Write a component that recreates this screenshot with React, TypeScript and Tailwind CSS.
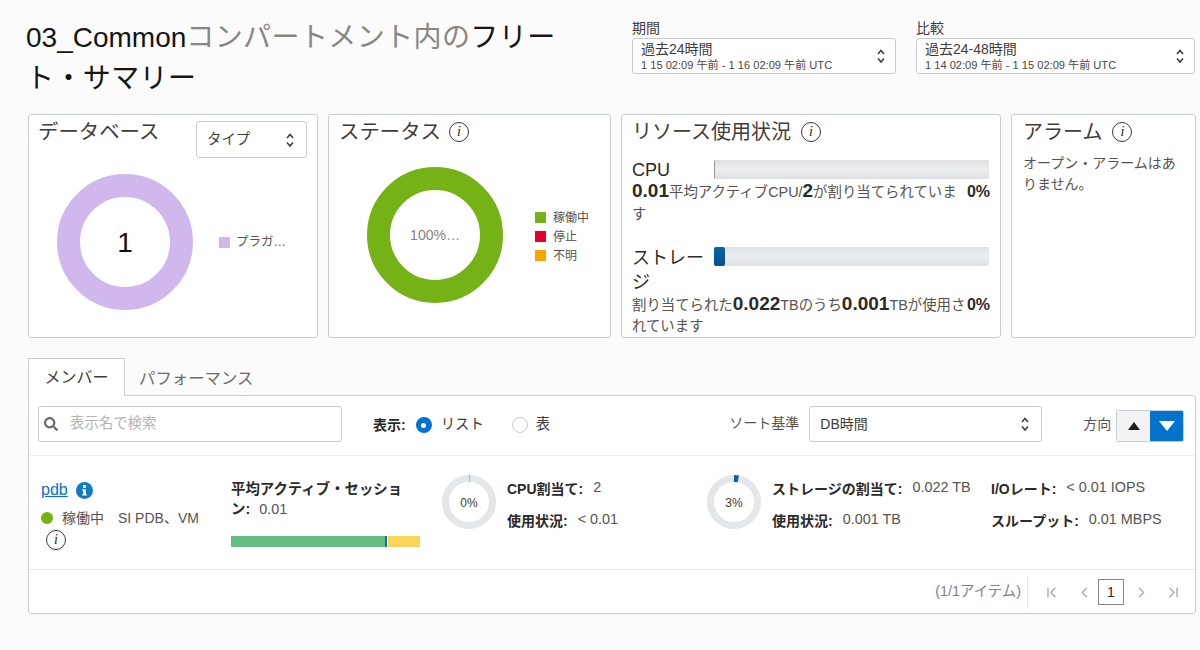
import { ChevronFirst, ChevronLast, ChevronLeft, ChevronRight } from "lucide-react"
import { FaSearch } from "react-icons/fa"

const font = "font-['Liberation_Sans','Noto_Sans_CJK_JP',sans-serif]"

function Updown({ className = "" }: { className?: string }) {
  return (
    <svg width="10" height="16" viewBox="0 0 10 16" className={className} fill="none" stroke="#3f3c39" strokeWidth="1.6">
      <path d="M2 6l3-3.500L8 6" />
      <path d="M2 10.500L5 14l3-3.500" />
    </svg>
  )
}

function InfoMark({ size = "w-[20px] h-[20px]" }: { size?: string }) {
  return (
    <span className={`${size} inline-flex shrink-0 items-center justify-center rounded-full border border-[#3a3734] bg-white font-['Liberation_Serif',serif] text-[14px] italic leading-none text-[#2c2a28]`}>
      i
    </span>
  )
}

function Card({ className, children }: { className: string; children: React.ReactNode }) {
  return <div className={`h-[224px] shrink-0 overflow-hidden rounded-[3px] border border-[#c7cdd2] bg-white ${className}`}>{children}</div>
}

function Meter({ value, color }: { value: number; color: string }) {
  const r = 23.5
  const c = 2 * Math.PI * r
  return (
    <svg width="54" height="54" viewBox="0 0 54 54" className="shrink-0">
      <circle cx="27" cy="27" r={r} fill="none" stroke="#e3e7e9" strokeWidth="7" />
      <circle
        cx="27"
        cy="27"
        r={r}
        fill="none"
        stroke={color}
        strokeWidth="7"
        strokeDasharray={`${Math.max(c * value, 0.5)} ${c}`}
        transform="rotate(-90 27 27)"
      />
      <text x="27" y="32" textAnchor="middle" fontSize="12" fill="#3f3c39">
        {value === 0 ? "0%" : "3%"}
      </text>
    </svg>
  )
}

function Stat({ label, value, className = "" }: { label: string; value: string; className?: string }) {
  return (
    <div className={`flex items-start whitespace-nowrap ${className}`}>
      <span className="text-[14px] font-bold text-[#2c2a28]">{label}:</span>
      <span className="ml-[10px] -mt-[2px] text-[14.4px] text-[#56534f]">{value}</span>
    </div>
  )
}

function DateSelect({ main, sub, width }: { main: string; sub: string; width: string }) {
  return (
    <div className={`flex h-[36px] items-center justify-between rounded-[3px] border border-[#c7cdd2] bg-white pl-[8px] pr-[9px] ${width}`}>
      <div className="leading-none">
        <div className="text-[14px] leading-[17px] text-[#3f3c39]">{main}</div>
        <div className="text-[11.1px] leading-[14px] text-[#4a4744]">{sub}</div>
      </div>
      <Updown />
    </div>
  )
}

function Swatch({ color, label }: { color: string; label: string }) {
  return (
    <div className="flex h-[19px] items-center gap-[7px] text-[12px] text-[#56534f]">
      <span className={`h-[11px] w-[11px] ${color}`} />
      {label}
    </div>
  )
}

export default function App() {
  return (
    <div className={`${font} h-[650px] w-[1200px] overflow-hidden bg-[#fbfbfb] pl-[28px] pr-[4px]`}>
      {/* header */}
      <div className="flex h-[114px] items-start">
        <h1 className="-ml-[2px] mt-[17px] w-[536px] text-[28px] leading-[41px] text-[#161513]">
          03_Common<span className="tracking-[0.4px] text-[#8a8682]">コンパートメント内の</span>
          <span className="tracking-[0.4px]">フリート・サマリー</span>
        </h1>
        <div className="ml-[70px] mt-[18px]">
          <div className="text-[14px] leading-[20px] text-[#3f3c39]">期間</div>
          <DateSelect main="過去24時間" sub="1 15 02:09 午前 - 1 16 02:09 午前 UTC" width="w-[264px]" />
        </div>
        <div className="ml-[20px] mt-[18px]">
          <div className="text-[14px] leading-[20px] text-[#3f3c39]">比較</div>
          <DateSelect main="過去24-48時間" sub="1 14 02:09 午前 - 1 15 02:09 午前 UTC" width="w-[279px]" />
        </div>
      </div>

      {/* summary cards */}
      <div className="flex gap-[10px]">
        <Card className="w-[290px] pl-[9px] pr-[10px]">
          <div className="flex items-start justify-between">
            <div className="mt-[2px] text-[20.400px] leading-[30px] text-[#3f3c39]">データベース</div>
            <div className="mt-[6px] flex h-[37px] w-[111px] items-center justify-between rounded-[3px] border border-[#c7cdd2] pl-[10px] pr-[11px] text-[14.400px] text-[#3f3c39]">
              タイプ
              <Updown />
            </div>
          </div>
          <div className="mt-[16px] flex items-center pl-[19px]">
            <div className="relative h-[136px] w-[136px] shrink-0 rounded-full border-[23px] border-[#d0b8ec]">
              <span className="absolute inset-0 flex items-center justify-center pt-[2px] text-[28px] text-[#111]">1</span>
            </div>
            <div className="ml-[26px] flex items-center gap-[6px] text-[12.500px] text-[#56534f]">
              <span className="h-[11px] w-[11px] bg-[#d0b8ec]" />
              プラガ…
            </div>
          </div>
        </Card>

        <Card className="w-[283px] pl-[10px]">
          <div className="mt-[2px] flex items-center gap-[8px] text-[20.400px] leading-[30px] text-[#3f3c39]">
            ステータス
            <InfoMark />
          </div>
          <div className="mt-[20px] flex items-center pl-[28px]">
            <div className="flex h-[136px] w-[136px] shrink-0 items-center justify-center rounded-full border-[23px] border-[#75b216] text-[14px] text-[#85817d]">
              100%…
            </div>
            <div className="ml-[32px] pt-[3px]">
              <Swatch color="bg-[#75b216]" label="稼働中" />
              <Swatch color="bg-[#e4002b]" label="停止" />
              <Swatch color="bg-[#f7a600]" label="不明" />
            </div>
          </div>
        </Card>

        <Card className="w-[380px] pl-[10px] pr-[10px]">
          <div className="mt-[2px] flex items-center gap-[10px] text-[20px] leading-[30px] text-[#3f3c39]">
            リソース使用状況
            <InfoMark />
          </div>
          <div className="mt-[11px] flex">
            <div className="w-[82px] shrink-0 text-[18px] leading-[24px] text-[#2c2a28]">CPU</div>
            <div className="mt-[2px] h-[19px] w-[275px] rounded-[2px] border-l border-l-[#8d9a90] bg-linear-to-b from-[#dde1e3] via-[#eceeef] to-[#dde1e3]" />
          </div>
          <div className="-mt-[1px] flex justify-between">
            <div className="w-[336px] text-[14.400px] leading-[22px] text-[#56534f]">
              <b className="text-[19px] leading-none text-[#2c2a28]">0.01</b>平均アクティブCPU/<b className="text-[19px] leading-none text-[#2c2a28]">2</b>が割り当てられています
            </div>
            <b className="text-[16px] leading-[22px] text-[#2c2a28]">0%</b>
          </div>
          <div className="mt-[21px] flex">
            <div className="w-[82px] shrink-0 pr-[4px] text-[18px] leading-[24px] text-[#2c2a28]">ストレージ</div>
            <div className="mt-[1px] h-[19px] w-[275px] rounded-[2px] bg-linear-to-b from-[#dde1e3] via-[#eceeef] to-[#dde1e3]">
              <div className="h-[19px] w-[11px] rounded-[2px] bg-linear-to-b from-[#0a62a8] to-[#06508f]" />
            </div>
          </div>
          <div className="flex justify-between">
            <div className="w-[336px] text-[14.400px] leading-[21px] text-[#56534f]">
              割り当てられた<b className="text-[19px] leading-none text-[#2c2a28]">0.022</b>TBのうち<b className="text-[19px] leading-none text-[#2c2a28]">0.001</b>TBが使用されています
            </div>
            <b className="text-[16px] leading-[21px] text-[#2c2a28]">0%</b>
          </div>
        </Card>

        <Card className="w-[185px] pl-[11px] pr-[10px]">
          <div className="mt-[2px] flex items-center gap-[10px] text-[20px] leading-[30px] text-[#3f3c39]">
            アラーム
            <InfoMark />
          </div>
          <p className="mt-[6px] text-[14px] leading-[21px] text-[#56534f]">オープン・アラームはありません。</p>
        </Card>
      </div>

      {/* tabs */}
      <div className="mt-[20px] flex h-[37px]">
        <div className="z-10 flex h-[38px] w-[97px] items-center justify-center border border-b-0 border-[#c7cdd2] bg-white text-[16px] text-[#3f3c39]">
          メンバー
        </div>
        <div className="flex items-center pl-[14px] pt-[4px] text-[16.400px] text-[#6f6b67]">パフォーマンス</div>
      </div>

      {/* members panel */}
      <div className="h-[219px] w-[1168px] rounded-b-[3px] rounded-tr-[3px] border border-[#c7cdd2] bg-white">
        <div className="flex h-[60px] items-start border-b border-[#eeeff0] pl-[9px]">
          <div className="mt-[10px] flex h-[36px] w-[304px] items-center rounded-[3px] border border-[#c7cdd2] pl-[5px]">
            <FaSearch size={14} className="text-[#6f6b67]" />
            <span className="ml-[12px] text-[14.400px] text-[#b5b3b0]">表示名で検索</span>
          </div>
          <div className="ml-[31px] mt-[19px] flex h-[20px] items-center text-[14.400px]">
            <b className="text-[14px] text-[#2c2a28]">表示:</b>
            <span className="ml-[10px] flex h-[16px] w-[16px] items-center justify-center rounded-full bg-[#0572ce]">
              <span className="h-[5px] w-[5px] rounded-full bg-white" />
            </span>
            <span className="ml-[9px] text-[#3f3c39]">リスト</span>
            <span className="ml-[28px] h-[16px] w-[16px] rounded-full border border-[#c7cdd2] bg-white" />
            <span className="ml-[8px] text-[#3f3c39]">表</span>
          </div>
          <span className="ml-[179px] mt-[17px] text-[14px] leading-[20px] text-[#56534f]">ソート基準</span>
          <div className="ml-[10px] mt-[10px] flex h-[36px] w-[233px] items-center justify-between rounded-[3px] border border-[#c7cdd2] pl-[10px] pr-[11px] text-[14px] text-[#3f3c39]">
            DB時間
            <Updown />
          </div>
          <span className="ml-[41px] mt-[18px] text-[14px] leading-[20px] text-[#56534f]">方向</span>
          <div className="ml-[5px] mt-[14px] flex h-[32px] w-[68px] overflow-hidden rounded-[2px] border border-[#c7cdd2]">
            <span className="flex flex-1 items-center justify-center bg-[#f3f3f3]">
              <svg width="14" height="10" viewBox="0 0 14 10"><path d="M7 1l6 8H1z" fill="#1f1d1b" /></svg>
            </span>
            <span className="flex w-[33px] items-center justify-center bg-[#0572ce]">
              <svg width="16" height="10" viewBox="0 0 16 10"><path d="M8 10L0 0h16z" fill="#fff" /></svg>
            </span>
          </div>
        </div>

        <div className="flex h-[114px] border-b border-[#e6e8e9]">
          <div className="w-[202px] shrink-0 pl-[12px] pt-[25px]">
            <div className="flex items-center gap-[8px]">
              <span className="text-[16px] leading-[18px] text-[#0572ce] underline">pdb</span>
              <svg width="17" height="17" viewBox="0 0 17 17">
                <circle cx="8.500" cy="8.500" r="8.500" fill="#0f79c6" />
                <rect x="7" y="3" width="3" height="3" rx="1" fill="#fff" />
                <path d="M6.200 7.200h3.600v5h1v1.400H6.200v-1.400h1v-3.600h-1z" fill="#fff" />
              </svg>
            </div>
            <div className="mt-[9px] flex items-center whitespace-nowrap text-[14px] leading-[20px] text-[#56534f]">
              <span className="h-[12px] w-[12px] rounded-full bg-[#75b216]" />
              <span className="ml-[9px]">稼働中</span>
              <span className="ml-[14px]">SI PDB、VM</span>
            </div>
            <div className="ml-[5px] mt-[2px] flex">
              <InfoMark />
            </div>
          </div>

          <div className="w-[189px] shrink-0 pt-[23px]">
            <div className="text-[14.400px] leading-[20px] text-[#56534f]">
              <b className="text-[#2c2a28]">平均アクティブ・セッション:</b>
              <span className="ml-[9px]">0.01</span>
            </div>
            <div className="mt-[17px] flex h-[11px]">
              <span className="w-[154px] bg-[#65bd82]" />
              <span className="w-[2px] bg-[#0f6eb8]" />
              <span className="ml-[1px] flex-1 bg-[#fad55c]" />
            </div>
          </div>

          <div className="ml-[22px] flex w-[265px] shrink-0 pt-[19px]">
            <Meter value={0} color="#5f8f5f" />
            <div className="ml-[11px] pt-[4px]">
              <Stat label="CPU割当て" value="2" />
              <Stat label="使用状況" value="< 0.01" className="mt-[11px]" />
            </div>
          </div>

          <div className="flex w-[284px] shrink-0 pt-[19px]">
            <Meter value={0.03} color="#0a5fa8" />
            <div className="ml-[11px] pt-[4px]">
              <Stat label="ストレージの割当て" value="0.022 TB" />
              <Stat label="使用状況" value="0.001 TB" className="mt-[11px]" />
            </div>
          </div>

          <div className="shrink-0 pt-[23px]">
            <Stat label="I/Oレート" value="< 0.01 IOPS" />
            <Stat label="スループット" value="0.01 MBPS" className="mt-[11px]" />
          </div>
        </div>

        <div className="flex h-[43px] items-center justify-end pt-[1px] text-[#a9aaab]">
          <span className="text-[14.400px] text-[#85817d]">(1/1アイテム)</span>
          <span className="ml-[6px] h-[33px] w-px bg-[#e6e8e9]" />
          <ChevronFirst size={17} className="ml-[15px]" />
          <ChevronLeft size={17} className="ml-[16px]" />
          <span className="ml-[5px] flex h-[26px] w-[26px] items-center justify-center border border-[#8a8682] text-[14px] text-[#2c2a28]">1</span>
          <ChevronRight size={17} className="ml-[9px]" />
          <ChevronLast size={17} className="ml-[15px] mr-[13px]" />
        </div>
      </div>
    </div>
  )
}
